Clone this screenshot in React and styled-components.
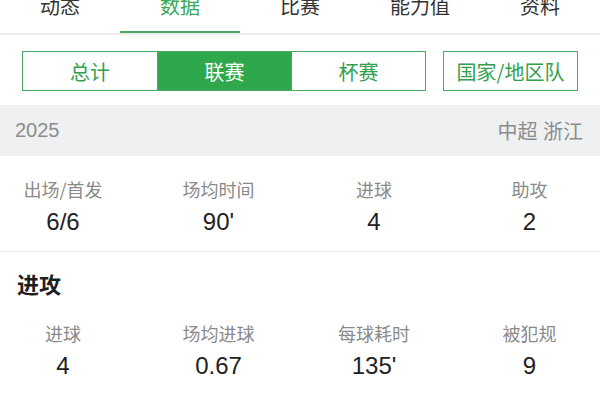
import React, { useState } from "react";
import styled, { createGlobalStyle } from "styled-components";

const GlobalStyle = createGlobalStyle`
  html, body {
    margin: 0;
    padding: 0;
    background: #fff;
  }
  body {
    font-family: "Liberation Sans", "Noto Sans CJK SC", sans-serif;
  }
`;

const GREEN = "#2fa84b";

const Page = styled.div`
  width: 600px;
  height: 400px;
  overflow: hidden;
  background: #fff;
`;

const TabBar = styled.div`
  display: grid;
  grid-template-columns: repeat(5, 120px);
  border-bottom: 2px solid #eeeeee;
`;

const Tab = styled.div`
  position: relative;
  height: 33px;
  display: flex;
  align-items: flex-end;
  justify-content: center;
  padding-bottom: 17px;
  box-sizing: border-box;
  font-family: "Noto Sans CJK SC", sans-serif;
  font-size: 20px;
  line-height: 20px;
  color: ${(p) => (p.active ? "#3aa856" : "#333")};
  cursor: pointer;

  &::after {
    content: "";
    position: absolute;
    left: 0;
    right: 0;
    bottom: 0;
    height: 2px;
    background: ${(p) => (p.active ? "#47a862" : "transparent")};
  }
`;

const FilterRow = styled.div`
  display: flex;
  gap: 17px;
  padding: 16px 22px 14px;
`;

const Segmented = styled.div`
  display: grid;
  grid-template-columns: repeat(3, 1fr);
  width: 404px;
  height: 40px;
  box-sizing: border-box;
  border: 1.5px solid #48aa60;
`;

const Segment = styled.div`
  display: flex;
  align-items: center;
  justify-content: center;
  font-family: "Noto Sans CJK SC", sans-serif;
  font-size: 20px;
  color: ${(p) => (p.active ? "#fff" : "#32a04c")};
  background: ${(p) => (p.active ? GREEN : "#fff")};
  & + & {
    border-left: 1.5px solid #48aa60;
  }
`;

const TeamButton = styled.div`
  width: 135px;
  height: 40px;
  box-sizing: border-box;
  border: 1.5px solid #48aa60;
  display: flex;
  align-items: center;
  justify-content: center;
  font-family: "Noto Sans CJK SC", sans-serif;
  font-size: 20px;
  color: #32a04c;
`;

const SeasonBar = styled.div`
  height: 51px;
  background: #eef0f2;
  display: flex;
  align-items: center;
  justify-content: space-between;
  padding: 0 17px 0 15px;
  font-size: 20px;
  color: #8c8c8c;
`;

const StatsGrid = styled.div`
  display: grid;
  grid-template-columns: repeat(4, 126px);
  column-gap: 29.5px;
  padding: ${(p) => p.pad || "22px 0 14px"};
  border-bottom: ${(p) => (p.divided ? "1px solid #ececec" : "none")};
`;

const Stat = styled.div`
  display: flex;
  flex-direction: column;
  align-items: center;
  gap: 7px;
`;

const Label = styled.div`
  font-family: "Noto Sans CJK SC", sans-serif;
  font-size: 18px;
  line-height: 22px;
  color: #8a8a8a;
  white-space: nowrap;
`;

const Value = styled.div`
  font-family: "Liberation Sans", sans-serif;
  font-size: 24px;
  line-height: 30px;
  color: #222;
`;

const SectionTitle = styled.div`
  padding: 17px 17px 0;
  font-family: "Noto Sans CJK SC", sans-serif;
  font-size: 22px;
  line-height: 28px;
  font-weight: 700;
  color: #1e1e1e;
`;

const tabs = ["动态", "数据", "比赛", "能力值", "资料"];
const segments = ["总计", "联赛", "杯赛"];

const overview = [
  { label: "出场/首发", value: "6/6" },
  { label: "场均时间", value: "90'" },
  { label: "进球", value: "4" },
  { label: "助攻", value: "2" },
];

const attack = [
  { label: "进球", value: "4" },
  { label: "场均进球", value: "0.67" },
  { label: "每球耗时", value: "135'" },
  { label: "被犯规", value: "9" },
];

function StatRow({ items, ...rest }) {
  return (
    <StatsGrid {...rest}>
      {items.map((it) => (
        <Stat key={it.label}>
          <Label>{it.label}</Label>
          <Value>{it.value}</Value>
        </Stat>
      ))}
    </StatsGrid>
  );
}

export default function App() {
  const [tab, setTab] = useState(1);
  const [seg, setSeg] = useState(1);

  return (
    <Page>
      <GlobalStyle />
      <TabBar>
        {tabs.map((t, i) => (
          <Tab key={t} active={i === tab} onClick={() => setTab(i)}>
            {t}
          </Tab>
        ))}
      </TabBar>
      <FilterRow>
        <Segmented>
          {segments.map((s, i) => (
            <Segment key={s} active={i === seg} onClick={() => setSeg(i)}>
              {s}
            </Segment>
          ))}
        </Segmented>
        <TeamButton>国家/地区队</TeamButton>
      </FilterRow>
      <SeasonBar>
        <span>2025</span>
        <span>中超 浙江</span>
      </SeasonBar>
      <StatRow items={overview} divided />
      <SectionTitle>进攻</SectionTitle>
      <StatRow items={attack} pad="25px 0 14px" />
    </Page>
  );
}
